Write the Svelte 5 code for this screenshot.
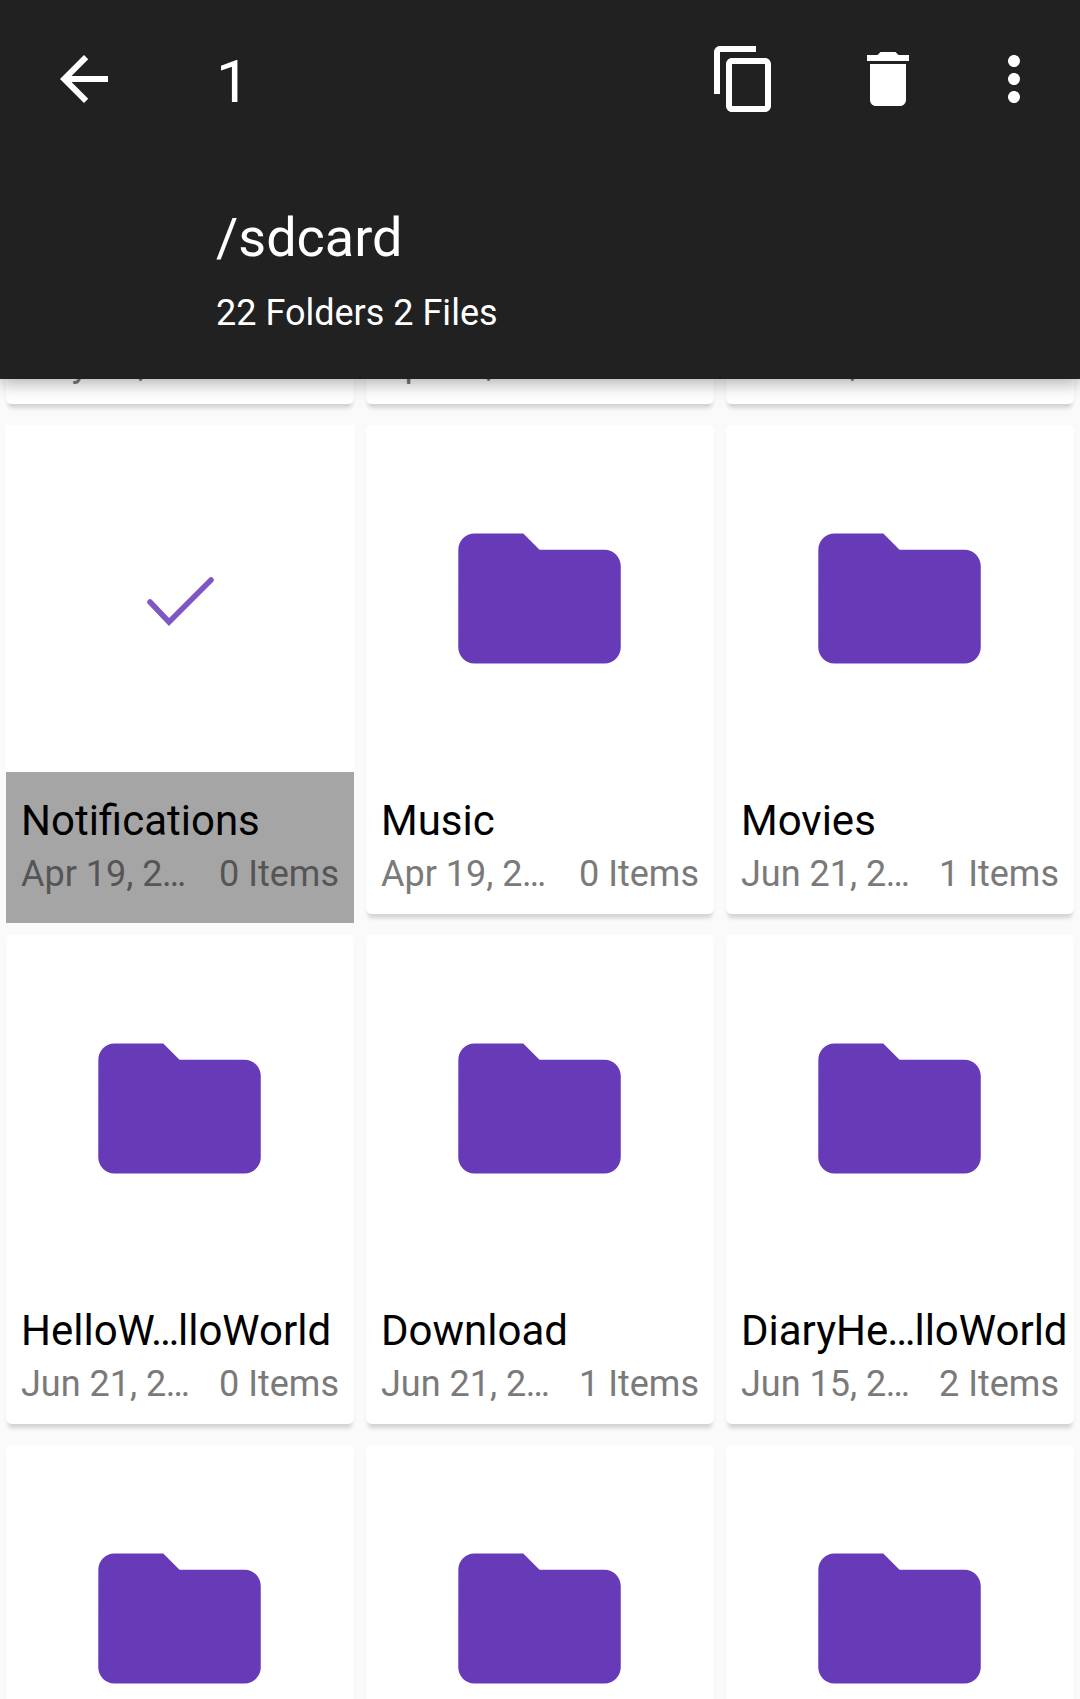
<script>
  const folders = [
    { name: "Movies", date: "May 11, 2…", count: 0 },
    { name: "Pictures", date: "Apr 19, 2…", count: 0 },
    { name: "Podcasts", date: "Jun 21, 2…", count: 0 },
    { name: "Notifications", date: "Apr 19, 2…", count: 0, selected: true },
    { name: "Music", date: "Apr 19, 2…", count: 0 },
    { name: "Movies", date: "Jun 21, 2…", count: 1 },
    { name: "HelloW…lloWorld", date: "Jun 21, 2…", count: 0 },
    { name: "Download", date: "Jun 21, 2…", count: 1 },
    { name: "DiaryHe…lloWorld", date: "Jun 15, 2…", count: 2 },
    { name: "DCIM", date: "Jun 10, 2…", count: 3 },
    { name: "Books", date: "May 2, 2…", count: 0 },
    { name: "Audiobooks", date: "Apr 19, 2…", count: 0 }
  ];
</script>

{#snippet clipped(text)}
  {#each text.split("…") as part, i}{#if i}<span class="dots" class:kern={text.includes("W…")}>…</span>{/if}{part}{/each}
{/snippet}

<div class="screen">
  <header class="appbar">
    <div class="toolbar">
      <button class="icon back" aria-label="Back">
        <svg viewBox="0 0 24 24"><path d="M20 11H7.83l5.59-5.59L12 4l-8 8 8 8 1.41-1.41L7.83 13H20v-2z" /></svg>
      </button>
      <div class="count">1</div>
      <button class="icon" aria-label="Copy">
        <svg viewBox="0 0 24 24"><path d="M16 1H4c-1.1 0-2 .9-2 2v14h2V3h12V1zm3 4H8c-1.1 0-2 .9-2 2v14c0 1.1.9 2 2 2h11c1.1 0 2-.9 2-2V7c0-1.1-.9-2-2-2zm0 16H8V7h11v14z" /></svg>
      </button>
      <button class="icon" aria-label="Delete">
        <svg viewBox="0 0 24 24"><path d="M6 19c0 1.1.9 2 2 2h8c1.1 0 2-.9 2-2V7H6v12zM19 4h-3.5l-1-1h-5l-1 1H5v2h14V4z" /></svg>
      </button>
      <button class="icon more" aria-label="More">
        <svg viewBox="0 0 24 24"><path d="M12 8c1.1 0 2-.9 2-2s-.9-2-2-2-2 .9-2 2 .9 2 2 2zm0 2c-1.1 0-2 .9-2 2s.9 2 2 2 2-.9 2-2-.9-2-2-2zm0 6c-1.1 0-2 .9-2 2s.9 2 2 2 2-.9 2-2-.9-2-2-2z" /></svg>
      </button>
    </div>
    <div class="path">/sdcard</div>
    <div class="summary">22 Folders 2 Files</div>
  </header>

  <main class="grid">
    {#each folders as folder}
      <article class="card" class:selected={folder.selected}>
        <div class="thumb">
          {#if folder.selected}
            <svg class="check" viewBox="0 0 72 56"><path d="M6 31l19 20L67 9" /></svg>
          {:else}
            <svg class="folder" viewBox="0 0 24 24"><path d="M10 4H4c-1.1 0-1.99.9-1.99 2L2 18c0 1.1.9 2 2 2h16c1.1 0 2-.9 2-2V8c0-1.1-.9-2-2-2h-8l-2-2z" /></svg>
          {/if}
        </div>
        <div class="label">
          <div class="name">{@render clipped(folder.name)}</div>
          <div class="meta">
            <span>{@render clipped(folder.date)}</span>
            <span>{folder.count} Items</span>
          </div>
        </div>
      </article>
    {/each}
  </main>
</div>

<style>
  :global(body) {
    background: #fafafa;
  }

  .screen {
    height: 1699px;
    overflow: hidden;
    font-family: Roboto, sans-serif;
  }

  .appbar {
    position: relative;
    z-index: 2;
    height: 379px;
    box-sizing: border-box;
    background: #212121;
    color: #fff;
    box-shadow: 0 5px 16px rgba(0, 0, 0, 0.3);
  }

  .toolbar {
    display: flex;
    align-items: center;
    height: 158px;
    padding-left: 12px;
    padding-right: 12px;
  }

  .icon {
    display: flex;
    align-items: center;
    justify-content: center;
    width: 144px;
    height: 144px;
    padding: 0;
    border: 0;
    background: none;
  }

  .icon.more {
    width: 108px;
  }

  .icon svg {
    width: 72px;
    height: 72px;
    fill: #fff;
  }

  .count {
    flex: 1;
    padding-left: 60px;
    padding-top: 4px;
    font-size: 60px;
  }

  .path {
    margin-left: 216px;
    margin-top: 47px;
    font-size: 54px;
    line-height: 66px;
  }

  .summary {
    margin-left: 216px;
    margin-top: 18px;
    font-size: 36px;
    line-height: 48px;
  }

  .grid {
    display: grid;
    grid-template-columns: repeat(3, 348px);
    column-gap: 12px;
    row-gap: 12px;
    margin-top: -464px;
    padding: 0 6px;
  }

  .card {
    height: 489px;
    margin-bottom: 9px;
    background: #fff;
    border-radius: 6px;
    box-shadow: 0 6px 4px -2px rgba(0, 0, 0, 0.16);
  }

  .card.selected {
    height: 498px;
    margin-bottom: 0;
    border-radius: 0;
    box-shadow: none;
  }

  .thumb {
    display: flex;
    align-items: center;
    justify-content: center;
    height: 347px;
    padding-right: 2px;
  }

  .selected .thumb {
    padding-right: 0;
  }

  .folder {
    width: 195px;
    height: 195px;
    fill: #673ab7;
  }

  .check {
    width: 72px;
    height: 56px;
    fill: none;
    stroke: #7e57c2;
    stroke-width: 5.5;
    stroke-linecap: round;
  }

  .label {
    padding: 21px 15px 0;
  }

  .selected .label {
    height: 151px;
    box-sizing: border-box;
    background: #a5a5a5;
  }

  .name {
    font-size: 42px;
    line-height: 56px;
    color: #000;
    white-space: nowrap;
  }

  .dots {
    margin: 0 -1px;
  }

  .dots.kern {
    margin-left: -4px;
  }

  .meta {
    display: flex;
    justify-content: space-between;
    margin-top: 2px;
    font-size: 36px;
    line-height: 46px;
    color: #7a7a7a;
    white-space: nowrap;
  }

  .meta .dots {
    margin: 0 -0.5px;
  }

  .selected .meta {
    color: #555;
  }
</style>
